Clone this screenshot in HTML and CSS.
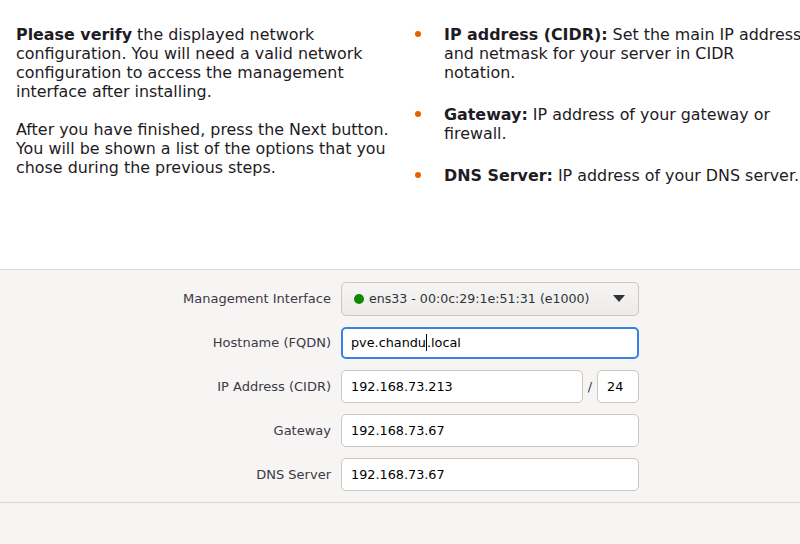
FILE: index.html
```html
<!DOCTYPE html>
<html>
<head>
<meta charset="utf-8">
<link rel="stylesheet" href="styles.css">
</head>
<body>
<div class="page">
  <section class="intro">
    <div class="col-left">
      <p><b>Please verify</b> the displayed network configuration. You will need a valid network configuration to access the management interface after installing.</p>
      <p>After you have finished, press the Next button. You will be shown a list of the options that you chose during the previous steps.</p>
    </div>
    <div class="col-right">
      <ul>
        <li><b>IP address (CIDR):</b> Set the main IP address<br>and netmask for your server in CIDR<br>notation.</li>
        <li><b>Gateway:</b> IP address of your gateway or<br>firewall.</li>
        <li><b>DNS Server:</b> IP address of your DNS server.</li>
      </ul>
    </div>
  </section>
  <section class="form">
    <div class="row">
      <label class="lbl">Management Interface</label>
      <div class="combo">
        <span class="dot"></span>
        <span class="combo-text">ens33 - 00:0c:29:1e:51:31 (e1000)</span>
        <span class="arrow"></span>
      </div>
    </div>
    <div class="row">
      <label class="lbl">Hostname (FQDN)</label>
      <div class="entry focus">pve.chandu<span class="caret"></span>.local</div>
    </div>
    <div class="row">
      <label class="lbl">IP Address (CIDR)</label>
      <div class="cidr">
        <div class="entry grow">192.168.73.213</div>
        <span class="slash">/</span>
        <div class="entry mask">24</div>
      </div>
    </div>
    <div class="row">
      <label class="lbl">Gateway</label>
      <div class="entry">192.168.73.67</div>
    </div>
    <div class="row">
      <label class="lbl">DNS Server</label>
      <div class="entry">192.168.73.67</div>
    </div>
  </section>
  <div class="bottom"></div>
</div>
</body>
</html>
```
FILE: styles.css
```css
html, body {
  margin: 0;
  padding: 0;
  width: 800px;
  height: 544px;
  overflow: hidden;
  background: #f6f5f4;
  font-family: "DejaVu Sans", sans-serif;
}
.page {
  display: flex;
  flex-direction: column;
  height: 544px;
}
.intro {
  background: #ffffff;
  height: 270px;
  box-sizing: border-box;
  padding: 25px 0 0 16px;
  display: flex;
  color: #1e1b24;
  font-size: 15.9px;
  line-height: 19px;
  overflow: hidden;
  border-bottom: 1px solid #dcd8d5;
}
.col-left {
  width: 378px;
  flex: none;
}
.col-left p {
  margin: 0 0 19px 0;
}
.col-right {
  flex: none;
  width: 420px;
  margin-left: 22px;
  white-space: nowrap;
}
.col-right ul {
  margin: 0;
  padding: 0 0 0 28px;
  list-style: none;
}
.col-right li {
  position: relative;
  margin: 0 0 23px 0;
  padding: 0;
}
.col-right li::before {
  content: "";
  position: absolute;
  left: -29px;
  top: 6px;
  width: 6px;
  height: 6px;
  border-radius: 50%;
  background: #e66100;
}
.form {
  padding: 12px 0 11px 0;
  display: flex;
  flex-direction: column;
  gap: 11px;
  border-bottom: 1px solid #d8d4d0;
}
.row {
  display: flex;
  align-items: center;
  height: 33px;
}
.lbl {
  width: 341px;
  flex: none;
  text-align: right;
  font-size: 13px;
  color: #3d3846;
  padding-right: 10px;
  box-sizing: border-box;
}
.combo {
  width: 298px;
  height: 34px;
  box-sizing: border-box;
  border: 1px solid #cdc7c2;
  border-radius: 5px;
  background: linear-gradient(#f6f5f4, #edebe9);
  display: flex;
  align-items: center;
  padding: 0 12px 0 12px;
  font-size: 12.6px;
  color: #2e3436;
}
.dot {
  width: 10px;
  height: 10px;
  border-radius: 50%;
  background: #0b8a00;
  margin-right: 5px;
  flex: none;
}
.combo-text {
  flex: 1;
}
.arrow {
  width: 0;
  height: 0;
  border-left: 6px solid transparent;
  border-right: 6px solid transparent;
  border-top: 7px solid #2e3436;
  margin-right: 1px;
}
.entry {
  width: 298px;
  height: 33px;
  box-sizing: border-box;
  border: 1px solid #cdc7c2;
  border-radius: 5px;
  background: #ffffff;
  font-size: 12.8px;
  color: #000000;
  display: flex;
  align-items: center;
  padding: 0 9px;
}
.entry.focus {
  border: 2px solid #3584e4;
  padding: 0 8px;
  height: 32px;
}
.caret {
  display: inline-block;
  width: 1px;
  height: 17px;
  background: #000;
}
.cidr {
  display: flex;
  align-items: center;
  width: 298px;
}
.entry.grow {
  width: 242px;
  flex: none;
}
.slash {
  width: 14px;
  text-align: center;
  font-size: 13px;
  color: #3d3846;
}
.entry.mask {
  width: 42px;
  flex: none;
}
.bottom {
  flex: 1;
}
```
